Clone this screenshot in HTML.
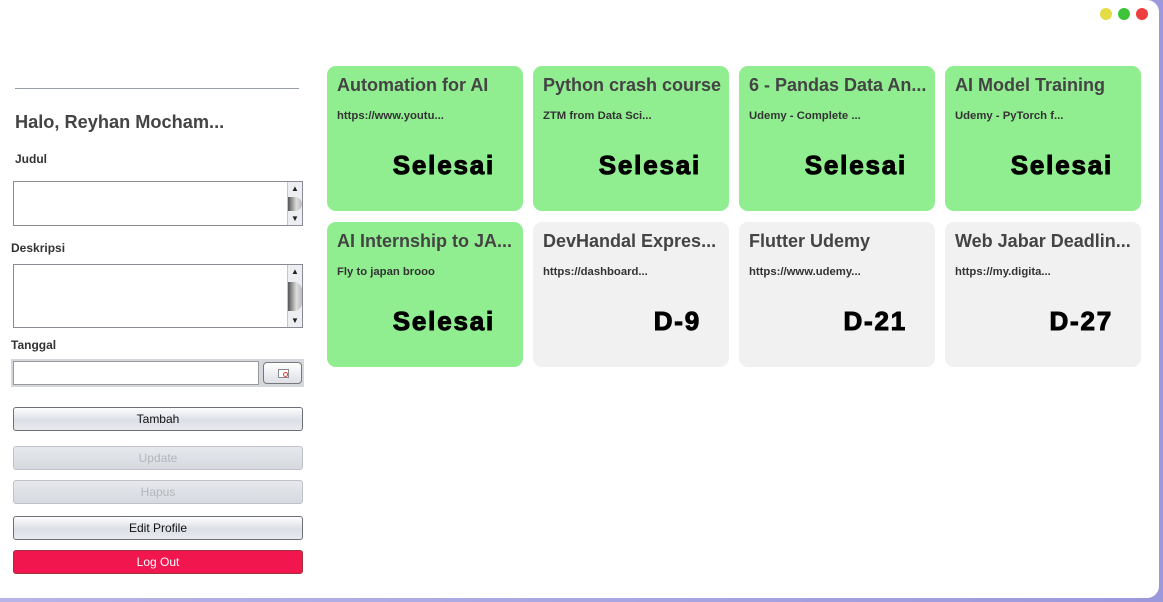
<!DOCTYPE html>
<html><head><style>
*{box-sizing:border-box;margin:0;padding:0}
body{width:1163px;height:602px;overflow:hidden;background:linear-gradient(90deg,#b8b4e8,#9c98dc);font-family:"Liberation Sans",Arial,sans-serif;position:relative}
.win{position:absolute;left:0;top:0;width:1159px;height:598px;background:#fff;border-radius:0 12px 12px 0}
.dot{position:absolute;top:8px;width:12px;height:12px;border-radius:50%}
.abs{position:absolute}
.lbl{position:absolute;font-size:12px;font-weight:bold;color:#333}
.ta{position:absolute;left:13px;width:290px;border:1px solid #8a8a96;background:#fff}
.sb{position:absolute;right:0;top:0;bottom:0;width:15px;background:#eceef2;border-left:1px solid #c4c6cc;font-size:8px;color:#222;text-align:center}
.thumb{position:absolute;left:0;right:0;border-radius:0 8px 8px 0;background:linear-gradient(90deg,#555,#ddd 60%,#bbb)}
.btn{position:absolute;left:13px;width:290px;height:24px;border:1px solid #6c6e78;border-radius:3px;background:linear-gradient(#fdfdfe,#dcdfe6 55%,#e8eaef);font-size:12px;text-align:center;line-height:23px;color:#111}
.dis{border-color:#c0c2c8;color:#b4b6bc;background:linear-gradient(#e6e8ec,#d6d9df)}
.card{position:absolute;width:196px;height:145px;border-radius:9px;background:#f1f1f1}
.g{background:#90ee90}
.card .t{position:absolute;left:10px;top:9px;font-size:18px;font-weight:bold;color:#444;white-space:nowrap}
.card .s{position:absolute;left:10px;top:44px;font-size:11.3px;font-weight:bold;color:#333}
.card .st{position:absolute;right:28px;top:84px;font-size:26px;font-weight:900;color:#000;letter-spacing:1.8px;-webkit-text-stroke:1px #000}
</style></head><body>
<div class="win">
<div class="dot" style="left:1100px;background:#e4dc44"></div>
<div class="dot" style="left:1118px;background:#3dc43a"></div>
<div class="dot" style="left:1136px;background:#ee3e3e"></div>

<div class="abs" style="left:15px;top:88px;width:284px;height:1px;background:#9aa0a8"></div>
<div class="abs" style="left:15px;top:112px;font-size:18.2px;font-weight:bold;color:#444">Halo, Reyhan Mocham...</div>
<div class="lbl" style="left:15px;top:152px">Judul</div>
<div class="ta" style="top:181px;height:45px"><div class="sb"><div style="position:absolute;top:2px;width:100%">▲</div><div class="thumb" style="top:15px;height:14px"></div><div style="position:absolute;bottom:2px;width:100%">▼</div></div></div>
<div class="lbl" style="left:11px;top:241px">Deskripsi</div>
<div class="ta" style="top:264px;height:64px"><div class="sb"><div style="position:absolute;top:2px;width:100%">▲</div><div class="thumb" style="top:17px;height:29px"></div><div style="position:absolute;bottom:2px;width:100%">▼</div></div></div>
<div class="lbl" style="left:11px;top:338px">Tanggal</div>
<div class="abs" style="left:11px;top:359px;width:293px;height:28px;background:#d4d7dc"></div>
<div class="abs" style="left:13px;top:361px;width:246px;height:24px;background:#fff;border:1px solid #999"></div>
<div class="abs" style="left:263px;top:362px;width:39px;height:22px;border:1px solid #777;border-radius:4px;background:linear-gradient(#fff,#dde0e6)"><div style="position:absolute;left:14px;top:6px;width:11px;height:9px;border:1px solid #888;background:#fff"><div style="position:absolute;left:4px;top:2px;width:5px;height:5px;border:1px solid #e33;border-radius:50%"></div></div></div>

<div class="btn" style="top:407px">Tambah</div>
<div class="btn dis" style="top:446px">Update</div>
<div class="btn dis" style="top:480px">Hapus</div>
<div class="btn" style="top:516px">Edit Profile</div>
<div class="btn" style="top:550px;background:#f2164e;border-color:#a0303c;color:#fff">Log Out</div>

<div class="card g" style="left:327px;top:66px"><div class="t">Automation for AI</div><div class="s">https://www.youtu...</div><div class="st">Selesai</div></div>
<div class="card g" style="left:533px;top:66px"><div class="t">Python crash course</div><div class="s">ZTM from Data Sci...</div><div class="st">Selesai</div></div>
<div class="card g" style="left:739px;top:66px"><div class="t">6 - Pandas Data An...</div><div class="s">Udemy - Complete ...</div><div class="st">Selesai</div></div>
<div class="card g" style="left:945px;top:66px"><div class="t">AI Model Training</div><div class="s">Udemy - PyTorch f...</div><div class="st">Selesai</div></div>
<div class="card g" style="left:327px;top:222px"><div class="t">AI Internship to JA...</div><div class="s">Fly to japan brooo</div><div class="st">Selesai</div></div>
<div class="card" style="left:533px;top:222px"><div class="t">DevHandal Expres...</div><div class="s">https://dashboard...</div><div class="st">D-9</div></div>
<div class="card" style="left:739px;top:222px"><div class="t">Flutter Udemy</div><div class="s">https://www.udemy...</div><div class="st">D-21</div></div>
<div class="card" style="left:945px;top:222px"><div class="t">Web Jabar Deadlin...</div><div class="s">https://my.digita...</div><div class="st">D-27</div></div>
</div>
</body></html>
